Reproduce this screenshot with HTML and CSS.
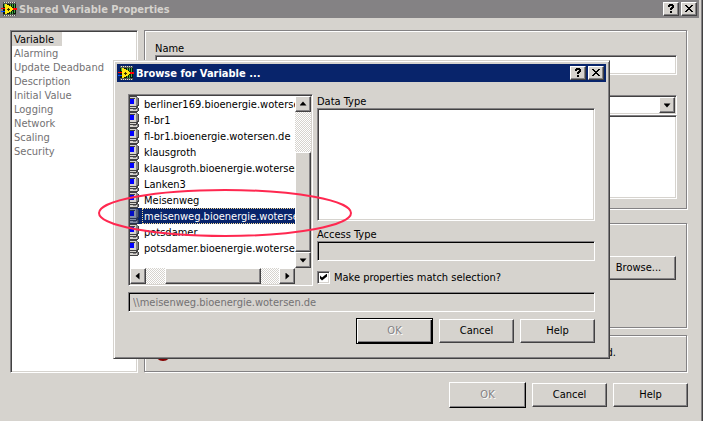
FILE: index.html
```
<!DOCTYPE html>
<html lang="en">
<head>
  <meta charset="UTF-8" />
  <title>Shared Variable Properties</title>
  <meta name="viewport" content="width=device-width, initial-scale=1.0"/>
  <link rel="stylesheet" href="styles.css">
</head>
<body>

  <!-- Shared symbols -->
  <svg class="symbols" aria-hidden="true">
    <symbol id="app-icon" viewBox="0 0 16 16">
      <path d="M2 1h13v14H2z" fill="#525552"/>
      <path d="M3 1h1v1H3zM5 1h1v1H5zM7 1h1v1H7zM9 1h1v1H9zM11 1h1v1h-1zM13 1h1v1h-1zM3 14h1v1H3zM5 14h1v1H5zM7 14h1v1H7zM9 14h1v1H9zM11 14h1v1h-1zM13 14h1v1h-1z" fill="#e0e0d8"/>
      <path d="M2 3h13v10H2z" fill="#081808"/>
      <path d="M3 3h1v3H3zM9 3h1v2H9zM11 3h1v3h-1zM13 3h1v9h-1zM11 10h1v3h-1zM9 11h1v2H9z" fill="#42a642"/>
      <path d="M0 7h5v1H0zM11 7h5v2h-5z" fill="#f00"/>
      <path d="M0 10h4v1H0z" fill="#0050ff"/>
      <path d="M4 3h2v1h2v1h2v1h1v1h1v2h-1v1h-1v1H8v1H6v1H4z" fill="#ffe810"/>
      <path d="M6 8h3v1H6zM7 7h1v3H7z" fill="#302800"/>
    </symbol>
    <symbol id="computer" viewBox="0 0 9 16">
      <path d="M0 0h7v1h1v1h1v8H8v2h1v3H8v1H0z" fill="#424142"/>
      <path d="M0 1h6v9H0z" fill="#d6d3ce"/>
      <path d="M6 1h2v8H7v1H6z" fill="#848284"/>
      <path d="M0 2h5v1H0z" fill="#424142"/>
      <path d="M0 3h4v5H0z" fill="#00f"/>
      <path d="M0 11h6v1H0zM0 13h7v2H0z" fill="#d6d3ce"/>
      <path d="M7 12h1v3H7zM3 13h3v1H3z" fill="#848284"/>
    </symbol>
    <symbol id="question" viewBox="0 0 14 12">
      <path d="M5 1h4v1h1v3H9v1H8v1H6V5h1V4h1V3H6v1H4V2h1zM6 8h2v2H6z" fill="#000"/>
    </symbol>
    <symbol id="cross" viewBox="0 0 14 12">
      <path d="M3 2h2v1h1v1h2V3h1V2h2v1h-1v1H9v1H8v1h1v1h1v1h1v1H9V8H8V7H6v1H5v1H3V8h1V7h1V6h1V5H5V4H4V3H3z" fill="#000"/>
    </symbol>
  </svg>

  <div class="window">
    <header class="titlebar">
      <svg class="title-icon"><use href="#app-icon"/></svg>
      <h1>Shared Variable Properties</h1>
      <button class="title-button" type="button" aria-label="Help"><svg><use href="#question"/></svg></button>
      <button class="title-button close" type="button" aria-label="Close"><svg><use href="#cross"/></svg></button>
    </header>

    <main class="columns">
      <nav class="pages sunken">
        <ul>
          <li><a href="#" class="current">Variable</a></li>
          <li><a href="#">Alarming</a></li>
          <li><a href="#">Update Deadband</a></li>
          <li><a href="#">Description</a></li>
          <li><a href="#">Initial Value</a></li>
          <li><a href="#">Logging</a></li>
          <li><a href="#">Network</a></li>
          <li><a href="#">Scaling</a></li>
          <li><a href="#">Security</a></li>
        </ul>
      </nav>

      <div class="groups">
        <section class="group general">
          <label for="name">Name</label>
          <input id="name" class="field sunken" type="text">
          <div class="combo sunken">
            <select aria-label="Data Type"><option></option></select>
            <span class="combo-arrow raised"><i class="arrow down"></i></span>
          </div>
          <textarea class="details sunken" aria-label="Details"></textarea>
        </section>
        <section class="group binding">
          <button class="push raised" type="button">Browse...</button>
        </section>
        <section class="group status">
          <span class="status-dot"></span>
          <p>required.</p>
        </section>
      </div>
    </main>

    <footer class="actions">
      <button class="push raised ok" type="button" disabled>OK</button>
      <button class="push raised" type="button">Cancel</button>
      <button class="push raised" type="button">Help</button>
    </footer>
  </div>

  <div class="dialog" role="dialog" aria-labelledby="dialog-title">
    <header class="titlebar active">
      <svg class="title-icon"><use href="#app-icon"/></svg>
      <h2 id="dialog-title">Browse for Variable ...</h2>
      <button class="title-button" type="button" aria-label="Help"><svg><use href="#question"/></svg></button>
      <button class="title-button close" type="button" aria-label="Close"><svg><use href="#cross"/></svg></button>
    </header>

    <div class="dialog-body">
      <div class="browser">
        <div class="tree sunken">
          <ul class="hosts">
            <li><svg><use href="#computer"/></svg><span>berliner169.bioenergie.wotersen.de</span></li>
            <li><svg><use href="#computer"/></svg><span>fl-br1</span></li>
            <li><svg><use href="#computer"/></svg><span>fl-br1.bioenergie.wotersen.de</span></li>
            <li><svg><use href="#computer"/></svg><span>klausgroth</span></li>
            <li><svg><use href="#computer"/></svg><span>klausgroth.bioenergie.wotersen.de</span></li>
            <li><svg><use href="#computer"/></svg><span>Lanken3</span></li>
            <li><svg><use href="#computer"/></svg><span>Meisenweg</span></li>
            <li class="selected"><svg><use href="#computer"/></svg><span>meisenweg.bioenergie.wotersen.de</span></li>
            <li><svg><use href="#computer"/></svg><span>potsdamer</span></li>
            <li><svg><use href="#computer"/></svg><span>potsdamer.bioenergie.wotersen.de</span></li>
          </ul>
          <div class="scroll vertical">
            <button class="scroll-button raised" type="button" aria-label="Scroll up"><i class="arrow up"></i></button>
            <div class="thumb raised"></div>
            <button class="scroll-button raised" type="button" aria-label="Scroll down"><i class="arrow down"></i></button>
          </div>
          <div class="scroll horizontal">
            <button class="scroll-button raised" type="button" aria-label="Scroll left"><i class="arrow left"></i></button>
            <div class="thumb raised"></div>
            <button class="scroll-button raised" type="button" aria-label="Scroll right"><i class="arrow right"></i></button>
          </div>
        </div>

        <div class="selection">
          <label for="data-type">Data Type</label>
          <textarea id="data-type" class="data-type sunken"></textarea>
          <label for="access-type">Access Type</label>
          <input id="access-type" class="field sunken" type="text" disabled>
          <div class="match">
            <input id="match" type="checkbox" checked>
            <label for="match">Make properties match selection?</label>
          </div>
        </div>
      </div>

      <input class="field sunken path" type="text" aria-label="Path" value="\\meisenweg.bioenergie.wotersen.de" disabled>

      <div class="dialog-actions">
        <button class="push raised ok default" type="button" disabled>OK</button>
        <button class="push raised" type="button">Cancel</button>
        <button class="push raised" type="button">Help</button>
      </div>
    </div>
  </div>

  <!-- Hand-drawn marker around the selected host -->
  <svg class="marker" viewBox="0 0 256 52" aria-hidden="true">
    <ellipse cx="128" cy="26" rx="126" ry="23" fill="none" stroke="#ff2850" stroke-width="2"/>
  </svg>

</body>
</html>
```
FILE: styles.css
```
* {
  margin: 0;
  padding: 0;
  box-sizing: border-box;
}

body {
  position: relative;
  min-height: 100vh;
  padding-right: 3px;
  background: #fff;
  color: #000;
  font-family: "DejaVu Sans Condensed", "DejaVu Sans", sans-serif;
  font-size: 11px;
  line-height: 14px;
  overflow: hidden;
}

button,
input,
select,
textarea {
  font: inherit;
  color: inherit;
  border-radius: 0;
}

label {
  padding-top: 2px;
  line-height: 12px;
}

ul {
  list-style: none;
}

.symbols {
  display: none;
}

/* BEVELS */
.sunken {
  border: 1px solid;
  border-color: #848284 #fff #fff #848284;
  box-shadow: inset 1px 1px #424142, inset -1px -1px #d6d3ce;
  background: #fff;
}

.raised {
  border: 1px solid;
  border-color: #fff #424142 #424142 #fff;
  box-shadow: inset -1px -1px #848284;
  background: #d6d3ce;
}

/* MAIN WINDOW */
.window {
  min-height: 100vh;
  background: #d6d3ce;
  border-right: 1px solid #424142;
  box-shadow: inset -1px 0 #848284;
}

.titlebar {
  display: flex;
  align-items: center;
  height: 18px;
  margin-right: 3px;
  padding: 0 2px 0 1px;
  background: #848284;
  color: #d6d3ce;
}

.titlebar h1,
.titlebar h2 {
  flex: 1;
  padding: 2px 0 0 2px;
  font-size: 11px;
  font-weight: bold;
}

.title-icon {
  width: 16px;
  height: 16px;
}

.title-button {
  width: 16px;
  height: 14px;
  border: 1px solid;
  border-color: #fff #424142 #424142 #fff;
  box-shadow: inset -1px -1px #848284;
  background: #d6d3ce;
}

.title-button.close {
  margin-left: 2px;
}

.title-button svg {
  display: block;
  width: 14px;
  height: 12px;
}

.columns {
  display: flex;
  gap: 6px;
  padding: 12px 15px 0 10px;
}

.pages {
  flex: 0 0 128px;
  padding: 1px;
  color: #737173;
}

.pages a {
  display: inline-block;
  padding: 2px 2px 0;
  color: inherit;
  line-height: 12px;
  text-decoration: none;
  vertical-align: top;
}

.pages a.current {
  padding-right: 8px;
  background: #d6d3ce;
  color: #000;
}

.groups {
  flex: 1;
  display: flex;
  flex-direction: column;
}

.group {
  border: 1px solid #848284;
  box-shadow: 1px 1px #fff, inset 1px 1px #fff;
  margin: 0 0 1px;
}

.general {
  display: flex;
  flex-direction: column;
  padding: 10px 9px 9px 10px;
  margin-bottom: 14px;
}

.field {
  display: block;
  width: 100%;
  height: 20px;
  padding: 0 4px;
}

.combo {
  display: flex;
  height: 20px;
  margin-top: 20px;
  padding: 1px;
}

.combo select {
  flex: 1;
  appearance: none;
  border: 0;
  background: transparent;
}

.combo-arrow {
  display: flex;
  align-items: center;
  justify-content: center;
  width: 16px;
}

.details {
  height: 84px;
  resize: none;
}

.binding {
  display: flex;
  justify-content: flex-end;
  padding: 32px 10px 47px;
  margin-bottom: 7px;
}

.status {
  display: flex;
  align-items: center;
  justify-content: space-between;
  padding: 9px 70px 10px 10px;
}

.status-dot {
  width: 16px;
  height: 16px;
  border-radius: 50%;
  background: #840000;
}

/* BUTTONS */
.push {
  width: 75px;
  height: 24px;
}

.push.ok {
  width: 77px;
  height: 26px;
  border-color: #fff #000 #000 #fff;
  color: #848284;
  text-shadow: 1px 1px #fff;
}

.push.default {
  border-color: #000;
  box-shadow: inset 1px 1px #fff, inset -1px -1px #000, inset -2px -2px #848284;
}

.actions,
.dialog-actions {
  display: flex;
  align-items: center;
  justify-content: flex-end;
  gap: 6px;
}

.actions {
  padding: 9px 14px 12px;
}

/* DIALOG */
.dialog {
  position: absolute;
  top: 60px;
  left: 113px;
  right: 96px;
  padding: 3px;
  background: #d6d3ce;
  border: 1px solid;
  border-color: #d6d3ce #424142 #424142 #d6d3ce;
  box-shadow: inset 1px 1px #fff, inset -1px -1px #848284;
}

.titlebar.active {
  margin: 0;
  background: #08246b;
  color: #fff;
}

.dialog-body {
  padding: 12px 11px 11px;
}

.browser {
  display: grid;
  grid-template-columns: 185px 1fr;
  gap: 4px;
}

.tree {
  display: grid;
  grid-template-columns: 1fr 16px;
  grid-template-rows: 172px 16px;
  padding: 1px;
  background: #d6d3ce;
}

.hosts {
  overflow: hidden;
  background: #fff;
}

.hosts li {
  display: flex;
  height: 16px;
  white-space: nowrap;
}

.hosts svg {
  flex: none;
  width: 9px;
  height: 16px;
}

.hosts span {
  margin-left: 3px;
  padding: 2px 0 0 2px;
  line-height: 14px;
}

.hosts .selected {
  background: #08246b;
  color: #fff;
}

.hosts .selected svg {
  opacity: 0.6;
}

.hosts .selected span {
  padding-left: 1px;
  border: 1px dotted #f7db94;
  line-height: 12px;
}

.scroll {
  display: flex;
  background: repeating-conic-gradient(#fff 0 25%, #d6d3ce 0 50%) 0 0 / 2px 2px;
}

.vertical {
  flex-direction: column;
}

.scroll-button {
  display: flex;
  align-items: center;
  justify-content: center;
  flex: none;
  width: 16px;
  height: 16px;
}

.vertical .thumb {
  height: 100px;
  margin-top: auto;
}

.horizontal .thumb {
  width: 96px;
  margin: 0 auto;
}

.arrow {
  width: 7px;
  height: 7px;
  background: #000;
}

.arrow.down {
  clip-path: polygon(0 2px, 100% 2px, 50% 6px);
}

.arrow.up {
  clip-path: polygon(0 5px, 100% 5px, 50% 1px);
}

.arrow.left {
  clip-path: polygon(5px 0, 5px 100%, 1px 50%);
}

.arrow.right {
  clip-path: polygon(2px 0, 2px 100%, 6px 50%);
}

.selection {
  display: flex;
  flex-direction: column;
}

.data-type {
  height: 113px;
  margin-bottom: 6px;
  resize: none;
}

.field:disabled {
  border-color: #848284 #fff #fff #848284;
  box-shadow: inset 1px 1px #000;
  background: #d6d3ce;
  color: #737173;
}

.match {
  display: flex;
  align-items: center;
  gap: 4px;
  margin-top: 9px;
}

.match input {
  appearance: none;
  width: 13px;
  height: 13px;
  border: 1px solid;
  border-color: #848284 #fff #fff #848284;
  box-shadow: inset 1px 1px #424142, inset -1px -1px #d6d3ce;
  background: #fff;
}

.match input:checked::before {
  content: "";
  display: block;
  width: 7px;
  height: 7px;
  margin: 2px;
  background: #000;
  clip-path: polygon(0 2px, 2px 4px, 7px 0, 7px 3px, 2px 7px, 0 5px);
}

.path {
  margin: 6px 0;
}

/* MARKER */
.marker {
  position: absolute;
  top: 187px;
  left: 97px;
  width: 256px;
  height: 52px;
  pointer-events: none;
}
```
